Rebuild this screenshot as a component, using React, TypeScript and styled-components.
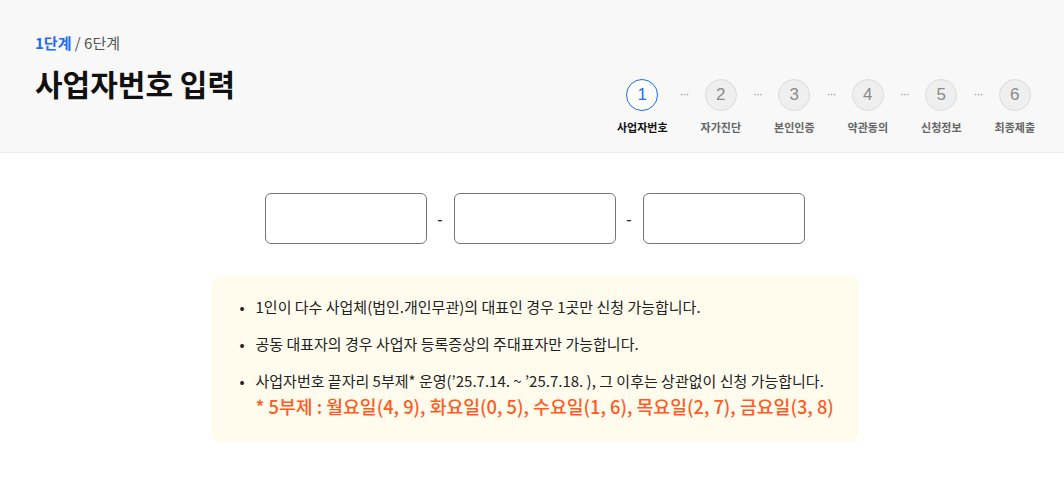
import React from "react";
import styled, { createGlobalStyle } from "styled-components";

const steps = ["사업자번호", "자가진단", "본인인증", "약관동의", "신청정보", "최종제출"];
const current = 1;

const notices = [
  "1인이 다수 사업체(법인.개인무관)의 대표인 경우 1곳만 신청 가능합니다.",
  "공동 대표자의 경우 사업자 등록증상의 주대표자만 가능합니다.",
];

const GlobalStyle = createGlobalStyle`
  * { box-sizing: border-box; }
  body {
    margin: 0;
    background: #fff;
    font-family: "Noto Sans CJK KR", "Noto Sans", sans-serif;
    color: #222;
  }
  ul { margin: 0; padding: 0; list-style: none; }
`;

const App: React.FC = () => {
  return (
    <>
      <GlobalStyle />
      <Header>
        <div className="header-left">
          <p className="header-stage">
            <em>{current}단계</em> / {steps.length}단계
          </p>
          <h1 className="header-title">사업자번호 입력</h1>
        </div>
        <StepList>
          {steps.map((label, index) => (
            <React.Fragment key={label}>
              {index > 0 && <StepDots>···</StepDots>}
              <StepItem $active={index + 1 === current}>
                <span className="step-circle">{index + 1}</span>
                <span className="step-label">{label}</span>
              </StepItem>
            </React.Fragment>
          ))}
        </StepList>
      </Header>
      <Main>
        <InputRow>
          <NumberInput aria-label="사업자번호 앞자리" />
          <Dash>-</Dash>
          <NumberInput aria-label="사업자번호 가운데자리" />
          <Dash>-</Dash>
          <NumberInput aria-label="사업자번호 끝자리" />
        </InputRow>
        <NoticeBox>
          {notices.map((text) => (
            <li key={text}>
              <span className="notice-bullet">•</span>
              <p>{text}</p>
            </li>
          ))}
          <li>
            <span className="notice-bullet">•</span>
            <div>
              <p>사업자번호 끝자리 5부제* 운영(’25.7.14. ~ ’25.7.18. ), 그 이후는 상관없이 신청 가능합니다.</p>
              <p className="notice-highlight">
                * 5부제 : 월요일(4, 9), 화요일(0, 5), 수요일(1, 6), 목요일(2, 7), 금요일(3, 8)
              </p>
            </div>
          </li>
        </NoticeBox>
      </Main>
    </>
  );
};

const Header = styled.header`
  height: 153px;
  display: flex;
  justify-content: space-between;
  padding: 0 29px 0 35px;
  background-color: #f8f8f8;
  border-bottom: 1px solid #ececec;
  .header-left {
    padding-top: 33px;
  }
  .header-stage {
    margin: 0;
    font-size: 15px;
    line-height: 20px;
    color: #555;
    em {
      font-style: normal;
      font-weight: 700;
      color: #1a6dff;
    }
  }
  .header-title {
    margin: 10px 0 0;
    font-size: 30px;
    line-height: 40px;
    font-weight: 700;
    color: #111;
  }
`;

const StepList = styled.ol`
  align-self: flex-end;
  display: flex;
  margin: 0;
  padding: 0 0 17px;
  list-style: none;
`;

const StepDots = styled.li`
  width: 33px;
  height: 32px;
  display: flex;
  align-items: center;
  justify-content: center;
  padding-bottom: 3px;
  font-family: "Liberation Sans", sans-serif;
  font-size: 12px;
  color: #999;
  letter-spacing: -1px;
`;

const StepItem = styled.li<{ $active: boolean }>`
  display: flex;
  flex-direction: column;
  align-items: center;
  .step-circle {
    width: 32px;
    height: 32px;
    display: flex;
    align-items: center;
    justify-content: center;
    border-radius: 50%;
    font-family: "Liberation Sans", sans-serif;
    font-size: 17px;
    background-color: ${(p) => (p.$active ? "#fff" : "#efefef")};
    border: ${(p) => (p.$active ? "1.5px solid #1a6dff" : "1px solid #dcdcdc")};
    color: ${(p) => (p.$active ? "#1a6dff" : "#8a8a8a")};
  }
  .step-label {
    margin-top: 8px;
    font-size: 11px;
    line-height: 16px;
    font-weight: 700;
    white-space: nowrap;
    color: ${(p) => (p.$active ? "#111" : "#666")};
  }
`;

const Main = styled.main`
  display: flex;
  flex-direction: column;
  align-items: center;
  padding: 40px 0 0 5px;
`;

const InputRow = styled.div`
  display: flex;
  align-items: center;
`;

const NumberInput = styled.input`
  width: 162px;
  height: 51px;
  padding: 0 12px;
  border: 1px solid #767676;
  border-radius: 6px;
  background: #fff;
  font-size: 16px;
  outline: none;
`;

const Dash = styled.span`
  width: 27px;
  text-align: center;
  font-size: 15px;
  font-weight: 500;
  color: #222;
`;

const NoticeBox = styled.ul`
  width: 648px;
  margin-top: 32px !important;
  padding: 20px 20px 22px 29px !important;
  background-color: #fffcee;
  border-radius: 8px;
  li {
    display: flex;
    font-size: 15px;
    line-height: 22px;
    color: #222;
    & + li {
      margin-top: 15px;
    }
  }
  p {
    margin: 0;
    white-space: nowrap;
  }
  .notice-bullet {
    width: 16px;
    flex-shrink: 0;
  }
  .notice-highlight {
    font-size: 18.3px;
    line-height: 28px;
    font-weight: 500;
    color: #ff5a1f;
  }
`;

export default App;
